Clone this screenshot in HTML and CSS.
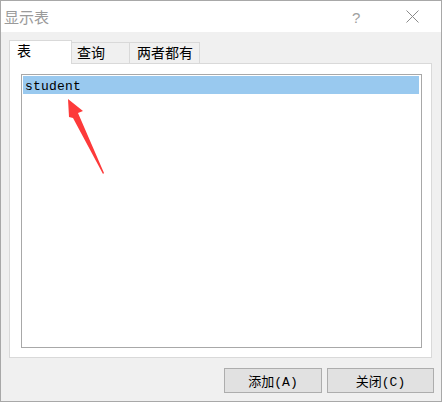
FILE: index.html
```html
<!DOCTYPE html>
<html lang="zh-CN">
<head>
    <meta charset="UTF-8">
    <title>显示表</title>
    <link rel="stylesheet" href="styles.css">
</head>
<body>
    <div class="window">
        <div class="title-bar">
            <span class="title">显示表</span>
            <span class="help">?</span>
            <svg class="close-icon" width="13" height="13" viewBox="0 0 13 13">
                <path d="M0.5 0.5 L12.5 12.5 M12.5 0.5 L0.5 12.5" stroke="#8a8a8a" stroke-width="1" fill="none"/>
            </svg>
        </div>
        <div class="dialog-body">
            <div class="tabs">
                <div class="tab active">表</div>
                <div class="tab">查询</div>
                <div class="tab">两者都有</div>
            </div>
            <div class="panel">
                <div class="listbox">
                    <div class="list-item selected">student</div>
                    <svg class="arrow" width="50" height="90" viewBox="0 0 50 90">
                        <polygon points="1,1 16,13 11,15 37,75 36,76 6,20 2,19" fill="#fd3a3a"/>
                    </svg>
                </div>
            </div>
            <div class="buttons">
                <button class="btn btn-add">添加(A)</button>
                <button class="btn btn-close">关闭(C)</button>
            </div>
        </div>
    </div>
</body>
</html>
```

FILE: styles.css
```css
* {
    margin: 0;
    padding: 0;
    box-sizing: border-box;
}
body {
    font-family: "Noto Sans CJK SC", sans-serif;
    background: #ffffff;
}
.window {
    width: 442px;
    height: 402px;
    border: 1px solid #a8a8a8;
    background: #f0f0f0;
    display: flex;
    flex-direction: column;
}
.title-bar {
    height: 31px;
    background: white;
    display: flex;
    align-items: center;
    position: relative;
}
.title {
    margin-left: 3px;
    font-size: 15px;
    color: #9a9a9a;
    line-height: 1;
}
.help {
    position: absolute;
    left: 351px;
    top: 8px;
    font-family: "Liberation Sans", sans-serif;
    font-size: 15px;
    color: #a0a0a0;
}
.close-icon {
    position: absolute;
    left: 405px;
    top: 9px;
}
.dialog-body {
    flex: 1;
    padding: 8px 8px 0 8px;
    display: flex;
    flex-direction: column;
}
.tabs {
    display: flex;
    align-items: flex-end;
    height: 23px;
}
.tab {
    height: 21px;
    border: 1px solid #d9d9d9;
    border-bottom: none;
    border-left: none;
    background: #f0f0f0;
    font-size: 14px;
    line-height: 19px;
    color: #000;
    padding-left: 6px;
    padding-right: 6px;
}
.tab:nth-child(2) {
    width: 58px;
    padding-left: 5px;
}
.tab:nth-child(3) {
    width: 70px;
    padding-left: 7px;
}
.tab.active {
    width: 63px;
    height: 24px;
    margin-bottom: -1px;
    background: white;
    border-left: 1px solid #d9d9d9;
    position: relative;
    z-index: 1;
    padding-left: 7px;
    line-height: 18px;
}
.panel {
    width: 423px;
    height: 295px;
    background: white;
    border: 1px solid #d9d9d9;
    padding: 10px 0 0 11px;
}
.listbox {
    width: 401px;
    height: 274px;
    border: 1px solid #a8a8a8;
    padding: 1px 1px 0 1px;
    position: relative;
}
.list-item {
    height: 18px;
    margin-right: 1px;
    font-family: "Liberation Mono", monospace;
    font-size: 13px;
    line-height: 18px;
    padding-top: 2px;
    padding-left: 2px;
    letter-spacing: 0.2px;
    color: #000;
}
.list-item.selected {
    background: #99c9ef;
}
.arrow {
    position: absolute;
    left: 45px;
    top: 23px;
}
.buttons {
    display: flex;
    justify-content: flex-end;
    gap: 5px;
    margin-top: 10px;
    margin-right: -1px;
}
.btn {
    height: 25px;
    background: #e1e1e1;
    border: 1px solid #adadad;
    font-family: "Liberation Mono", "Noto Sans CJK SC", monospace;
    font-size: 13px;
    color: #000;
}
.btn-add {
    width: 98px;
}
.btn-close {
    width: 107px;
}
```
